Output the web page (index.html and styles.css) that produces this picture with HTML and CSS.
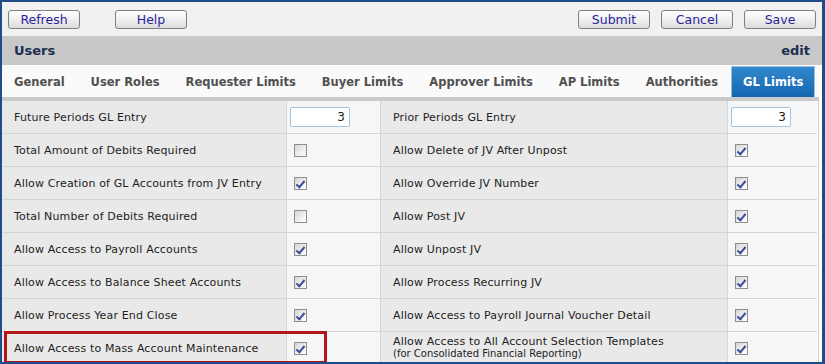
FILE: index.html
```html
<!DOCTYPE html>
<html lang="en">
<head>
    <meta charset="UTF-8">
    <meta name="viewport" content="width=device-width, initial-scale=1.0">
    <title>Users - GL Limits</title>
    <link rel="stylesheet" href="styles.css">
</head>
<body>
    <div class="frame">
        <div class="toolbar">
            <div class="toolbar-left">
                <button class="btn">Refresh</button>
                <button class="btn">Help</button>
            </div>
            <div class="toolbar-right">
                <button class="btn">Submit</button>
                <button class="btn">Cancel</button>
                <button class="btn">Save</button>
            </div>
        </div>

        <div class="title-bar">
            <span>Users</span>
            <span>edit</span>
        </div>

        <div class="tabs">
            <div class="tab">General</div>
            <div class="tab">User Roles</div>
            <div class="tab">Requester Limits</div>
            <div class="tab">Buyer Limits</div>
            <div class="tab">Approver Limits</div>
            <div class="tab">AP Limits</div>
            <div class="tab">Authorities</div>
            <div class="tab active">GL Limits</div>
        </div>

        <div class="settings">
            <div class="label">Future Periods GL Entry</div>
            <div class="field"><input class="num" type="text" value="3"></div>
            <div class="label">Prior Periods GL Entry</div>
            <div class="field"><input class="num" type="text" value="3"></div>

            <div class="label">Total Amount of Debits Required</div>
            <div class="field"><span class="check"></span></div>
            <div class="label">Allow Delete of JV After Unpost</div>
            <div class="field"><span class="check on"></span></div>

            <div class="label">Allow Creation of GL Accounts from JV Entry</div>
            <div class="field"><span class="check on"></span></div>
            <div class="label">Allow Override JV Number</div>
            <div class="field"><span class="check on"></span></div>

            <div class="label">Total Number of Debits Required</div>
            <div class="field"><span class="check"></span></div>
            <div class="label">Allow Post JV</div>
            <div class="field"><span class="check on"></span></div>

            <div class="label">Allow Access to Payroll Accounts</div>
            <div class="field"><span class="check on"></span></div>
            <div class="label">Allow Unpost JV</div>
            <div class="field"><span class="check on"></span></div>

            <div class="label">Allow Access to Balance Sheet Accounts</div>
            <div class="field"><span class="check on"></span></div>
            <div class="label">Allow Process Recurring JV</div>
            <div class="field"><span class="check on"></span></div>

            <div class="label">Allow Process Year End Close</div>
            <div class="field"><span class="check on"></span></div>
            <div class="label">Allow Access to Payroll Journal Voucher Detail</div>
            <div class="field"><span class="check on"></span></div>

            <div class="label">Allow Access to Mass Account Maintenance</div>
            <div class="field"><span class="check on"></span></div>
            <div class="label two-line">
                <span>Allow Access to All Account Selection Templates</span>
                <small>(for Consolidated Financial Reporting)</small>
            </div>
            <div class="field"><span class="check on"></span></div>

            <div class="highlight"></div>
        </div>
    </div>
</body>
</html>
```

FILE: styles.css
```css
body {
    margin: 0;
    padding: 0;
    background-color: #fff;
    font-family: "DejaVu Sans", Verdana, sans-serif;
    color: #222;
}

.frame {
    width: 825px;
    height: 364px;
    box-sizing: border-box;
    border: 2px solid #1f4d8a;
    border-right-width: 3px;
    overflow: hidden;
    background-color: #fff;
}

/* toolbar */
.toolbar {
    height: 34px;
    box-sizing: border-box;
    padding: 8px 6px 0 6px;
    background-color: #f1f1f1;
    display: flex;
    justify-content: space-between;
    align-items: flex-start;
}

.toolbar-left {
    display: flex;
    gap: 35px;
}

.toolbar-right {
    display: flex;
    gap: 11px;
}

.btn {
    width: 72px;
    height: 19px;
    padding: 0;
    border: 1px solid #808080;
    border-radius: 3px;
    background: linear-gradient(#fefefe, #f1f1f1 45%, #dcdcdc);
    font-family: "DejaVu Sans", Verdana, sans-serif;
    font-size: 12.5px;
    color: #2b1f9c;
    line-height: 17px;
}

/* title */
.title-bar {
    height: 29px;
    padding: 0 12px;
    background-color: #c8c8c8;
    display: flex;
    justify-content: space-between;
    align-items: center;
    font-size: 13px;
    font-weight: bold;
    color: #1d2f4e;
}

/* tabs */
.tabs {
    height: 36px;
    box-sizing: border-box;
    padding-top: 1px;
    background-color: #fafafa;
    border-bottom: 4px solid #c9c9c9;
    margin-right: 3px;
    display: flex;
}

.tab {
    flex-shrink: 0;
    white-space: nowrap;
    padding: 0 12px 0 12px;
    margin-right: 2px;
    font-size: 11.5px;
    font-weight: bold;
    color: #505050;
    display: flex;
    align-items: center;
}

.tab.active {
    margin-left: -1px;
    margin-right: 0;
    padding: 0 11px;
    border: 1px solid #9cc2e3;
    border-bottom: none;
    background: linear-gradient(#3288cc, #1566b1);
    color: #fff;
}

/* settings grid */
.settings {
    position: relative;
    margin-right: 3px;
    border-right: 1px solid #cfcfcf;
    display: grid;
    grid-template-columns: 285px 94px 347px 89px;
    grid-auto-rows: 33px;
}

.label,
.field {
    box-sizing: border-box;
    border-right: 1px solid #d5d5d5;
    border-bottom: 1px solid #d5d5d5;
    display: flex;
    align-items: center;
}

.field:nth-child(4n) {
    border-right: none;
}

.label {
    padding-left: 12px;
    background-color: #e9e9e9;
    font-size: 11px;
    letter-spacing: 0.15px;
}

.label.two-line {
    flex-direction: column;
    align-items: flex-start;
    justify-content: center;
    line-height: 12px;
}

.label small {
    font-size: 10px;
    letter-spacing: 0;
}

.field {
    padding-left: 3px;
    background-color: #f6f6f6;
}

.num {
    width: 60px;
    height: 20px;
    box-sizing: border-box;
    padding: 0 4px;
    border: 1px solid #a4c3df;
    border-radius: 2px;
    background-color: #fff;
    font-family: "DejaVu Sans", Verdana, sans-serif;
    font-size: 12px;
    color: #222;
    text-align: right;
}

.check {
    width: 13px;
    height: 13px;
    box-sizing: border-box;
    margin-left: 4px;
    border: 1px solid #8e8e8e;
    background: linear-gradient(135deg, #d6d6d6, #f4f4f4 70%, #fff);
    position: relative;
}

.check.on::after {
    content: "";
    position: absolute;
    left: 3px;
    top: 1px;
    width: 3px;
    height: 7px;
    border: solid #3b4d9e;
    border-width: 0 2px 2px 0;
    transform: rotate(40deg);
}

.highlight {
    position: absolute;
    left: 2px;
    top: 230px;
    width: 323px;
    height: 33px;
    box-sizing: border-box;
    border: 3px solid #b21818;
}
```
